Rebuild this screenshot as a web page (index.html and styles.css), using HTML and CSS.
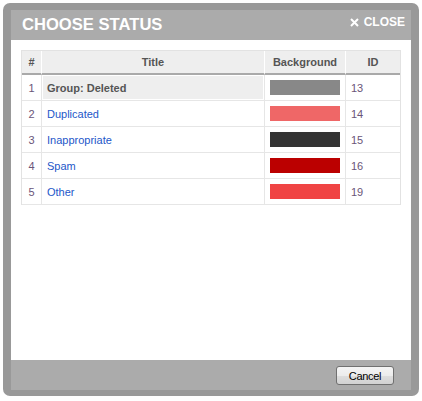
FILE: index.html
```html
<!DOCTYPE html>
<html lang="en">
<head>
  <meta charset="UTF-8">
  <title>Choose Status</title>
  <link rel="stylesheet" href="styles.css">
</head>
<body>
  <div class="dialog">
    <div class="dialog-title">
      <h2>CHOOSE STATUS</h2>
      <a class="close" href="#">
        <svg width="9" height="9" viewBox="0 0 9 9"><path d="M1 1 L8 8 M8 1 L1 8" stroke="#fff" stroke-width="2" fill="none"/></svg>
        CLOSE
      </a>
    </div>
    <div class="dialog-body">
      <table class="status-table">
        <thead>
          <tr>
            <th class="col-num">#</th>
            <th class="col-title">Title</th>
            <th class="col-bg">Background</th>
            <th class="col-id">ID</th>
          </tr>
        </thead>
        <tbody>
          <tr>
            <td class="num">1</td>
            <td class="group">Group: Deleted</td>
            <td><div class="swatch" style="background:#888888"></div></td>
            <td class="num">13</td>
          </tr>
          <tr>
            <td class="num">2</td>
            <td><a href="#">Duplicated</a></td>
            <td><div class="swatch" style="background:#ef6767"></div></td>
            <td class="num">14</td>
          </tr>
          <tr>
            <td class="num">3</td>
            <td><a href="#">Inappropriate</a></td>
            <td><div class="swatch" style="background:#333333"></div></td>
            <td class="num">15</td>
          </tr>
          <tr>
            <td class="num">4</td>
            <td><a href="#">Spam</a></td>
            <td><div class="swatch" style="background:#bb0000"></div></td>
            <td class="num">16</td>
          </tr>
          <tr>
            <td class="num">5</td>
            <td><a href="#">Other</a></td>
            <td><div class="swatch" style="background:#f04444"></div></td>
            <td class="num">19</td>
          </tr>
        </tbody>
      </table>
    </div>
    <div class="dialog-footer">
      <button type="button">Cancel</button>
    </div>
  </div>
</body>
</html>
```

FILE: styles.css
```css
body {
  font-family: "Liberation Sans", Arial, sans-serif;
  background-color: #fff;
  margin: 0;
  padding: 0;
}

.dialog {
  box-sizing: border-box;
  width: 416px;
  height: 393px;
  margin: 3px;
  padding: 7px 8px 6px 8px;
  background-color: #999;
  border-radius: 7px;
  display: flex;
  flex-direction: column;
}

.dialog-title {
  height: 30px;
  background-color: #ababab;
  display: flex;
  justify-content: space-between;
  align-items: flex-start;
  padding: 0 6px 0 11px;
}

.dialog-title h2 {
  margin: 0;
  font-size: 16.6px;
  line-height: 30px;
  color: #fff;
  font-weight: bold;
}

.close {
  margin-top: 5px;
  display: flex;
  align-items: center;
  gap: 5px;
  font-size: 12px;
  line-height: 14px;
  font-weight: bold;
  color: #fff;
  text-decoration: none;
}

.dialog-body {
  flex: 1;
  background-color: #fff;
  padding: 10px;
}

.status-table {
  width: 380px;
  table-layout: fixed;
  border-collapse: separate;
  border-spacing: 0;
  border: 1px solid #e2e2e2;
  border-bottom: none;
  font-size: 11px;
}

.status-table thead tr {
  height: 24px;
}

.status-table tbody tr {
  height: 26px;
}

.status-table th,
.status-table td {
  box-sizing: border-box;
  padding: 0 5px;
  text-align: left;
}

.status-table th {
  background-color: #eee;
  color: #555;
  font-weight: bold;
  text-align: center;
  border-bottom: 2px solid #a9a9a9;
  border-left: 1px solid #fff;
}

.status-table td {
  border-bottom: 1px solid #e6e6e6;
  border-left: 1px solid #e6e6e6;
}

.status-table th:first-child,
.status-table td:first-child {
  border-left: none;
}

.col-num { width: 19px; }
.col-title { width: 223px; }
.col-bg { width: 81px; }
.col-id { width: 55px; }

.status-table td.num {
  color: #6a5578;
}

.status-table td:first-child {
  text-align: center;
}

.status-table td.group {
  background-color: #eee;
  box-shadow: inset 0 0 0 1px #fff;
  color: #555;
  font-weight: bold;
}

.status-table a {
  color: #1d57c9;
  text-decoration: none;
}

.swatch {
  width: 70px;
  height: 15px;
}

.dialog-footer {
  height: 30px;
  background-color: #ababab;
  display: flex;
  justify-content: flex-end;
  align-items: flex-start;
  padding-right: 17px;
}

.dialog-footer button {
  margin-top: 6px;
  width: 58px;
  height: 19px;
  padding: 0;
  font-family: "Liberation Sans", Arial, sans-serif;
  font-size: 11px;
  letter-spacing: -0.3px;
  color: #000;
  border: 1px solid #707070;
  border-radius: 3px;
  background: linear-gradient(#f4f4f4, #ececec 50%, #dedede 51%, #d2d2d2);
  cursor: pointer;
}
```
